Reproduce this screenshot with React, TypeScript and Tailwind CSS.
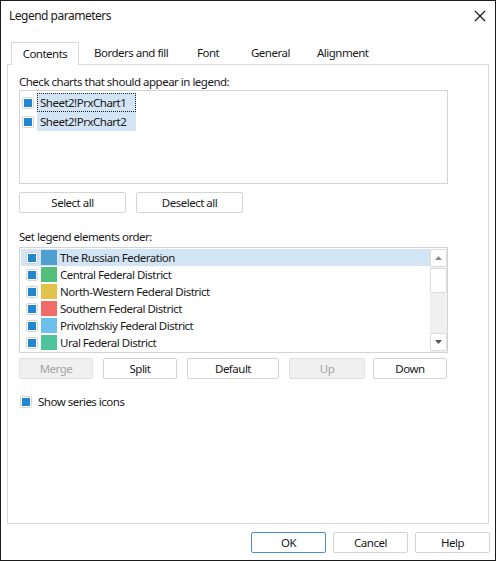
import React from 'react';

interface Item {
  name: string;
  color: string;
}

const items: Item[] = [
  { name: 'The Russian Federation', color: '#4f9fcf' },
  { name: 'Central Federal District', color: '#52c07a' },
  { name: 'North-Western Federal District', color: '#e3c24b' },
  { name: 'Southern Federal District', color: '#f26b6b' },
  { name: 'Privolzhskiy Federal District', color: '#6cc0ec' },
  { name: 'Ural Federal District', color: '#4fc39b' },
  // only the top edge of this one shows above the list border
  { name: '', color: '#d9904a' },
];

const Check: React.FC = () => (
  <span className="flex h-[12px] w-[12px] shrink-0 items-center justify-center rounded-[2px] border border-[#d6d6d6] bg-white">
    <span className="block h-[8px] w-[8px] bg-[#1f88d1]" />
  </span>
);

const Btn: React.FC<{ label: string; w: string; disabled?: boolean; primary?: boolean }> = ({ label, w, disabled, primary }) => (
  <div
    className={`flex h-[21px] shrink-0 items-center justify-center rounded-[2px] border ${w} ${
      disabled
        ? 'border-[#e0e0e0] bg-[#f0f0f0] text-[#a6a6a6]'
        : primary
        ? 'border-[#4a8ecb] bg-white text-[#1a1a1a]'
        : 'border-[#d4d4d4] bg-white text-[#1a1a1a]'
    }`}
  >
    {label}
  </div>
);

const App: React.FC = () => {
  return (
    <div
      className="flex h-[561px] w-[496px] flex-col border border-[#1c1c1c] bg-white text-[11.5px] leading-[16px] tracking-[-0.5px] text-[#1a1a1a]"
      style={{ fontFamily: '"Noto Sans", "Open Sans", sans-serif' }}
    >
      {/* title bar */}
      <div className="flex h-[30px] items-center justify-between pl-[8px] pr-[8px]">
        <span className="text-[12px]">Legend parameters</span>
        <svg width="12" height="12" viewBox="0 0 12 12" className="mr-[1px]">
          <path d="M1 1L11 11M11 1L1 11" stroke="#111" strokeWidth="1.1" />
        </svg>
      </div>

      {/* tabs */}
      <div className="mt-[11px] flex pl-[10px]">
        <div className="relative z-10 -mb-px flex h-[23px] w-[68px] items-center justify-center border border-b-0 border-[#d9d9d9] bg-white">
          Contents
        </div>
        <div className="flex h-[22px] w-[118px] items-center pl-[15px]">Borders and fill</div>
        <div className="flex h-[22px] w-[54px] items-center">Font</div>
        <div className="flex h-[22px] w-[66px] items-center">General</div>
        <div className="flex h-[22px] items-center">Alignment</div>
      </div>

      {/* tab panel */}
      <div className="ml-[6px] flex h-[460px] w-[482px] flex-col border border-[#d9d9d9] pl-[11px]">
        <div className="mt-[10px] leading-[14px]">Check charts that should appear in legend:</div>
        <div className="mt-[1px] flex h-[94px] w-[429px] flex-col border border-[#d4d4d4] pl-[2px] pt-[2px]">
          {['Sheet2!PrxChart1', 'Sheet2!PrxChart2'].map((n, i) => (
            <div key={n} className="flex h-[19px] items-center">
              <Check />
              <span
                className={`ml-[3px] flex h-[19px] w-[99px] items-center bg-[#d3e5f4] pl-[3px] ${
                  i === 0 ? 'outline outline-1 outline-offset-[-1px] outline-dotted outline-[#222]' : ''
                }`}
              >
                {n}
              </span>
            </div>
          ))}
        </div>

        <div className="mt-[8px] flex gap-[10px]">
          <Btn label="Select all" w="w-[107px]" />
          <Btn label="Deselect all" w="w-[107px]" />
        </div>

        <div className="mt-[17px] leading-[14px]">Set legend elements order:</div>
        <div className="mt-[3px] flex h-[106px] w-[429px] border border-[#d4d4d4] pl-[1px] pt-[1px]">
          <div className="flex flex-1 flex-col overflow-hidden">
            {items.map((it, i) => (
              <div
                key={i}
                className={`flex h-[17px] shrink-0 items-center ${i === 0 ? 'bg-[#d3e5f4]' : ''}`}
              >
                <span className="ml-[5px]">
                  <Check />
                </span>
                <span className="ml-[3px] h-[15px] w-[16px] shrink-0" style={{ backgroundColor: it.color }} />
                {it.name && <span className="ml-[3px]">{it.name}</span>}
              </div>
            ))}
          </div>
          <div className="flex w-[17px] flex-col bg-[#f0f0f0] pb-[1px]">
            <div className="flex h-[18px] items-center justify-center rounded-[2px] border border-[#dcdcdc] bg-white">
              <svg width="7" height="4" viewBox="0 0 7 4">
                <path d="M3.5 0L7 4H0z" fill="#8a8a8a" />
              </svg>
            </div>
            <div className="mt-[1px] h-[25px] rounded-[2px] border border-[#dcdcdc] bg-white" />
            <div className="flex-1" />
            <div className="flex h-[18px] items-center justify-center rounded-[2px] border border-[#dcdcdc] bg-white">
              <svg width="7" height="4" viewBox="0 0 7 4">
                <path d="M0 0H7L3.5 4z" fill="#555" />
              </svg>
            </div>
          </div>
        </div>

        <div className="mt-[5px] flex">
          <Btn label="Merge" w="w-[74px] mr-[10px]" disabled />
          <Btn label="Split" w="w-[74px] mr-[10px]" />
          <Btn label="Default" w="w-[92px] mr-[10px]" />
          <Btn label="Up" w="w-[76px] mr-[8px]" disabled />
          <Btn label="Down" w="w-[74px]" />
        </div>

        <div className="mt-[15px] flex items-center">
          <span className="ml-[1px]">
            <Check />
          </span>
          <span className="ml-[6px]">Show series icons</span>
        </div>
      </div>

      {/* footer buttons */}
      <div className="mt-[8px] flex justify-end gap-[7px] pr-[5px]">
        <Btn label="OK" w="w-[75px]" primary />
        <Btn label="Cancel" w="w-[75px]" />
        <Btn label="Help" w="w-[75px]" />
      </div>
    </div>
  );
};

export default App;
